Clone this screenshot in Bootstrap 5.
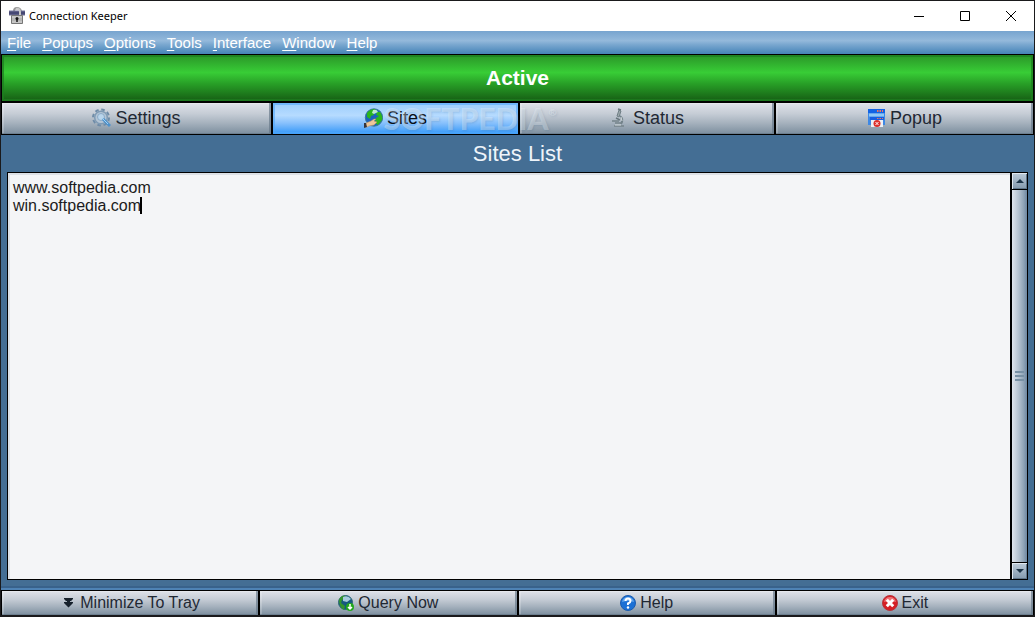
<!DOCTYPE html>
<html lang="en">
<head>
<meta charset="utf-8">
<meta name="viewport" content="width=device-width, initial-scale=1">
<title>Connection Keeper</title>
<link href="https://cdn.jsdelivr.net/npm/bootstrap@5.3.0/dist/css/bootstrap.min.css" rel="stylesheet">
<style>
body{font-family:"Liberation Sans",Arial,sans-serif;line-height:1;background:#446e94;color:#1f2a35}
svg{flex:none}
.app{border:1px solid #1a1a1c;border-bottom-width:2px}
.titlebar{height:30px;background:#fff;color:#000;font:11px/30px "Noto Sans","Open Sans",sans-serif;padding-left:8px}
.winbtn{width:46px;height:28px}
.menu{height:24px;gap:11px;padding:0 6px;font-size:15px;background:linear-gradient(#77a4cf,#94b9db 42%,#7ba8d0 58%,#4583b7);border-bottom:1px solid #000}
.menu a{color:#fff;text-decoration:none}
.menu u{text-underline-offset:2px;text-decoration-thickness:1px}
.state{height:47px;border:1px solid #000;border-top:0;padding-bottom:2px;color:#fff;font-size:21px;font-weight:700;background:linear-gradient(#2a9528,#38cd36 38%,#28a027 62%,#165e14);box-shadow:inset 0 0 0 2px #1d7d1fbb}
.tabs{height:33px;background:#000;border:1px solid #000;display:grid;grid-template-columns:269fr 245fr 254fr 257fr;gap:2px}
.tabs .metal{font-size:18px;padding-bottom:1px}
.metal{border:0;padding:0;gap:4px;display:flex;align-items:center;justify-content:center;color:#1f2833;background:linear-gradient(#dfe2e9,#c5ccd5 35%,#a5b1bd 65%,#7c8e9e);box-shadow:inset -2px -1px #647687aa,inset 2px 1px #ffffff35}
.metal.active{color:#0a0f16;background:linear-gradient(#9bcdfc,#b6dbff 40%,#87c0fc 65%,#3297f8);box-shadow:inset 0 0 0 2px #52a9fa99}
.watermark{left:37%;top:0;font:900 30px/31px Lato,sans-serif;color:#ffffff4a;text-shadow:1px 1px 2px #35608a2c;pointer-events:none;white-space:nowrap}
.watermark sup{font-size:10px;top:-14px}
.heading{font-size:22px;height:37px;padding-top:2px;color:#eef4fa;margin:0}
.editor{margin:0 6px;border:1px solid #000;background:#f4f5f7}
.editor textarea{border:0;outline:0;resize:none;background:transparent;color:#1b1b20;font-size:16px;line-height:18px;padding:6px 5px;overflow:hidden;box-shadow:inset 2px 2px #dde1e6}
.caret{left:132px;top:24px;width:2px;height:17px;background:#000}
.scroller{width:17px;border-left:2px solid #000;background:#000;gap:1px}
.scroller button{height:16px;border:0;padding:0;background:linear-gradient(#bccbd9,#8399ad);box-shadow:inset 1px 1px #e0e8f0,inset -1px -1px #5e7489}
.thumb{background:linear-gradient(90deg,#e0e6ee,#b4c2d0 45%,#8ca1b5 80%,#6d86a0)}
.grip{width:9px;height:10px;background:repeating-linear-gradient(#7891a5 0 2px,transparent 2px 4px)}
.rim{height:10px;background:linear-gradient(#446e94 0 6px,#39628b 6px 8px,#4f83b5 8px)}
.bottom{height:25px;background:#000;border:solid #000;border-width:1px 1px 0;display:grid;grid-template-columns:repeat(4,1fr);gap:2px}
.bottom .metal{font-size:16px}
</style>
</head>
<body>
<main class="app d-flex flex-column vh-100">
<header class="titlebar d-flex align-items-center">
<svg width="16" height="18" viewBox="0 0 16 18"><path d="M5 9V4q0-3 3-3t4 3v5" fill="none" stroke="#969696" stroke-width="2"/><path d="M0 4h16v4H0z" fill="#464874"/><path d="M0 4h16M0 8h16" stroke="#74759a"/><path d="M7 2q4-1 4 3v5" fill="none" stroke="#c8c8c8" stroke-width="2"/><path d="M2.500 8.500h11v8h-11z" fill="#b6b6b6" stroke="#777"/><path d="M3 10h10M3 15h10" stroke="#d5d5d5"/><circle cx="8" cy="11.500" r="1.500" fill="#151515"/><path d="M8 12v3" stroke="#151515" stroke-width="1.500"/></svg>
<span class="ps-1 flex-grow-1">Connection Keeper</span>
<button class="btn p-0 border-0 rounded-0 winbtn d-flex align-items-center justify-content-center" aria-label="Minimize"><svg width="10" height="10"><path d="M0 5.500h10" stroke="#000"/></svg></button>
<button class="btn p-0 border-0 rounded-0 winbtn d-flex align-items-center justify-content-center" aria-label="Maximize"><svg width="10" height="10"><path d="M.5.5h9v9h-9z" fill="none" stroke="#000"/></svg></button>
<button class="btn p-0 border-0 rounded-0 winbtn d-flex align-items-center justify-content-center" aria-label="Close"><svg width="10" height="10"><path d="M0 0l10 10M10 0L0 10" stroke="#000"/></svg></button>
</header>
<nav class="menu d-flex align-items-center"><a href="#"><u>F</u>ile</a><a href="#"><u>P</u>opups</a><a href="#"><u>O</u>ptions</a><a href="#"><u>T</u>ools</a><a href="#"><u>I</u>nterface</a><a href="#"><u>W</u>indow</a><a href="#"><u>H</u>elp</a></nav>
<div class="state d-flex align-items-center justify-content-center" role="status">Active</div>
<div class="tabs position-relative">
<button class="metal"><svg width="19" height="20" viewBox="0 0 19 20"><circle cx="9" cy="9.500" r="8" fill="none" stroke="#6f8ca8" stroke-width="2" stroke-dasharray="3.600 2.683"/><circle cx="9" cy="9.500" r="6.300" fill="#b4c5d5" stroke="#7f9bb5" stroke-width="1.500"/><circle cx="9" cy="9" r="3.500" fill="#b9d5ec" stroke="#8caac6"/><path d="M11 11l7 7" stroke="#4e92cc" stroke-width="3"/><path d="M10 10l6 6" stroke="#a3d2f4"/></svg>Settings</button>
<button class="metal active"><svg width="19" height="20" viewBox="0 0 19 20"><circle cx="10" cy="9.500" r="8.700" fill="#1b62bd" stroke="#3c7e9a"/><path d="M3 5q3-4 8-4l1 2-3 1 1 3-3 1-1 3-3-2zM13 4l3 0q3 4 2 8l-4 5-3-2 1-5 3-2-3-1z" fill="#2bb51e"/><path d="M9 2q4-1 5 2l-4 2-2-1z" fill="#bceccc"/><path d="M1 19l1-4 5-2 3-2 2 0-2 2 3 1-3 3-5 1-2 1z" fill="#edc79a" stroke="#b48b65" stroke-width=".5"/><path d="M0 15l2 0 1 4-3 1z" fill="#35353c"/></svg>Sites</button>
<button class="metal"><svg width="19" height="20" viewBox="0 0 19 20"><path d="M9 2l2 1-2 6-2-1z" fill="#9ba7ab" stroke="#6f7e85"/><path d="M8 1l3 1M6 10l4 2" stroke="#68777e" stroke-width="1.500"/><path d="M10 8q4 3 1 8" fill="none" stroke="#72828a" stroke-width="2"/><path d="M2 13h7M5 15h7M4 18h10" stroke="#75848b" stroke-width="1.500"/><path d="M11 9l1 4M5 17h6" stroke="#d0d8da"/></svg>Status</button>
<button class="metal"><svg width="19" height="20" viewBox="0 0 19 20"><path d="M1 1h17v16H1z" fill="#3e88e5"/><path d="M1 1h17v4H1z" fill="#1264e5"/><path d="M10 3h6" stroke="#f1745e" stroke-width="2" stroke-dasharray="1.500 1"/><path d="M2 7h15" stroke="#8fc8f6" stroke-width="3"/><path d="M3 9h14v3H3z" fill="#175fe0"/><path d="M10 10.500h6" stroke="#ef765f" stroke-dasharray="1.500 1"/><path d="M4 12h12v7H4z" fill="#edf0f5"/><circle cx="10" cy="15.500" r="3.500" fill="#dc2e2b"/><path d="M8.500 14l3 3m0-3l-3 3" stroke="#fff"/></svg>Popup</button>
<div class="watermark position-absolute" aria-hidden="true">SOFTPEDIA<sup>®</sup></div>
</div>
<h1 class="heading d-flex align-items-center justify-content-center fw-normal">Sites List</h1>
<section class="editor d-flex flex-grow-1 position-relative">
<textarea class="flex-grow-1" aria-label="Sites List" spellcheck="false">www.softpedia.com
win.softpedia.com</textarea>
<span class="caret position-absolute"></span>
<div class="scroller d-flex flex-column">
<button aria-label="Scroll up" class="d-flex align-items-center justify-content-center"><svg width="8" height="4"><path d="M0 4l4-4 4 4z" fill="#1c3448"/></svg></button>
<div class="thumb flex-grow-1 d-flex align-items-center justify-content-center"><span class="grip"></span></div>
<button aria-label="Scroll down" class="d-flex align-items-center justify-content-center"><svg width="8" height="4"><path d="M0 0h8l-4 4z" fill="#1c3448"/></svg></button>
</div>
</section>
<div class="rim"></div>
<footer class="bottom">
<button class="metal"><svg width="16" height="16" viewBox="0 0 16 16"><path d="M4 3h9v1l-3 3h3v1l-4.500 4.500L4 8V7h3L4 4z" fill="#17212c"/><path d="M5 6.500h2m3 0h2" stroke="#aab4be"/></svg>Minimize To Tray</button>
<button class="metal"><svg width="16" height="16" viewBox="0 0 16 16"><circle cx="7.500" cy="7.500" r="7" fill="#175980" stroke="#2d6774"/><path d="M1 5q2-5 7-4l-1 3-3 1-1 3 4 3-1 4Q1 12 1 5z" fill="#34962c"/><path d="M5 2q5-2 8 2l-4 3-4-1z" fill="#a5cadd"/><circle cx="12" cy="12" r="4" fill="#22a91b"/><path d="M12 9v5m-2-2l2 2 2-2" fill="none" stroke="#fff" stroke-width="1.500"/></svg>Query Now</button>
<button class="metal"><svg width="16" height="16" viewBox="0 0 16 16"><circle cx="8" cy="8" r="7.500" fill="#1b70d5" stroke="#1c5cae"/><path d="M2 7q1-5 6-5t6 5q-6-2-12 0z" fill="#62a5ed"/><path d="M5.500 6q0-2.500 2.500-2.500T10.500 6Q10.500 7.500 8 8.500V10" fill="none" stroke="#fff" stroke-width="2"/><circle cx="8" cy="12.500" r="1.200" fill="#fff"/></svg>Help</button>
<button class="metal"><svg width="16" height="16" viewBox="0 0 16 16"><circle cx="8" cy="8" r="7.500" fill="#d51f25" stroke="#b6343b"/><path d="M2 7q1-5 6-5t6 5q-6-2-12 0z" fill="#ef7276"/><path d="M4.800 4.800l6.400 6.400m0-6.400l-6.400 6.400" stroke="#fff" stroke-width="3"/></svg>Exit</button>
</footer>
</main>
<script src="https://cdn.jsdelivr.net/npm/bootstrap@5.3.0/dist/js/bootstrap.bundle.min.js"></script>
</body>
</html>
